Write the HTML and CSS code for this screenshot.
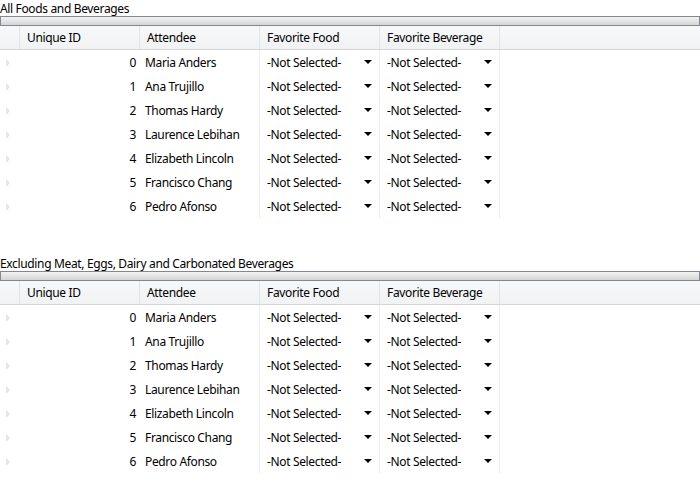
FILE: index.html
```html
<!DOCTYPE html>
<html>
<head>
<meta charset="utf-8">
<link rel="stylesheet" href="styles.css">
</head>
<body>
<section class="group">
  <div class="title">All Foods and Beverages</div>
  <div class="bar"></div>
  <div class="grid">
    <div class="row head">
      <div class="rh"></div>
      <div class="c">Unique ID</div>
      <div class="c">Attendee</div>
      <div class="c">Favorite Food</div>
      <div class="c">Favorite Beverage</div>
      <div class="fill"></div>
    </div>
    <div class="row"><div class="rh"><span class="tri"></span></div><div class="c num">0</div><div class="c">Maria Anders</div><div class="c dd">-Not Selected-<span class="arr"></span></div><div class="c dd">-Not Selected-<span class="arr"></span></div></div>
    <div class="row"><div class="rh"><span class="tri"></span></div><div class="c num">1</div><div class="c">Ana Trujillo</div><div class="c dd">-Not Selected-<span class="arr"></span></div><div class="c dd">-Not Selected-<span class="arr"></span></div></div>
    <div class="row"><div class="rh"><span class="tri"></span></div><div class="c num">2</div><div class="c">Thomas Hardy</div><div class="c dd">-Not Selected-<span class="arr"></span></div><div class="c dd">-Not Selected-<span class="arr"></span></div></div>
    <div class="row"><div class="rh"><span class="tri"></span></div><div class="c num">3</div><div class="c">Laurence Lebihan</div><div class="c dd">-Not Selected-<span class="arr"></span></div><div class="c dd">-Not Selected-<span class="arr"></span></div></div>
    <div class="row"><div class="rh"><span class="tri"></span></div><div class="c num">4</div><div class="c">Elizabeth Lincoln</div><div class="c dd">-Not Selected-<span class="arr"></span></div><div class="c dd">-Not Selected-<span class="arr"></span></div></div>
    <div class="row"><div class="rh"><span class="tri"></span></div><div class="c num">5</div><div class="c">Francisco Chang</div><div class="c dd">-Not Selected-<span class="arr"></span></div><div class="c dd">-Not Selected-<span class="arr"></span></div></div>
    <div class="row"><div class="rh"><span class="tri"></span></div><div class="c num">6</div><div class="c">Pedro Afonso</div><div class="c dd">-Not Selected-<span class="arr"></span></div><div class="c dd">-Not Selected-<span class="arr"></span></div></div>
  </div>
</section>
<section class="group">
  <div class="title">Excluding Meat, Eggs, Dairy and Carbonated Beverages</div>
  <div class="bar"></div>
  <div class="grid">
    <div class="row head">
      <div class="rh"></div>
      <div class="c">Unique ID</div>
      <div class="c">Attendee</div>
      <div class="c">Favorite Food</div>
      <div class="c">Favorite Beverage</div>
      <div class="fill"></div>
    </div>
    <div class="row"><div class="rh"><span class="tri"></span></div><div class="c num">0</div><div class="c">Maria Anders</div><div class="c dd">-Not Selected-<span class="arr"></span></div><div class="c dd">-Not Selected-<span class="arr"></span></div></div>
    <div class="row"><div class="rh"><span class="tri"></span></div><div class="c num">1</div><div class="c">Ana Trujillo</div><div class="c dd">-Not Selected-<span class="arr"></span></div><div class="c dd">-Not Selected-<span class="arr"></span></div></div>
    <div class="row"><div class="rh"><span class="tri"></span></div><div class="c num">2</div><div class="c">Thomas Hardy</div><div class="c dd">-Not Selected-<span class="arr"></span></div><div class="c dd">-Not Selected-<span class="arr"></span></div></div>
    <div class="row"><div class="rh"><span class="tri"></span></div><div class="c num">3</div><div class="c">Laurence Lebihan</div><div class="c dd">-Not Selected-<span class="arr"></span></div><div class="c dd">-Not Selected-<span class="arr"></span></div></div>
    <div class="row"><div class="rh"><span class="tri"></span></div><div class="c num">4</div><div class="c">Elizabeth Lincoln</div><div class="c dd">-Not Selected-<span class="arr"></span></div><div class="c dd">-Not Selected-<span class="arr"></span></div></div>
    <div class="row"><div class="rh"><span class="tri"></span></div><div class="c num">5</div><div class="c">Francisco Chang</div><div class="c dd">-Not Selected-<span class="arr"></span></div><div class="c dd">-Not Selected-<span class="arr"></span></div></div>
    <div class="row"><div class="rh"><span class="tri"></span></div><div class="c num">6</div><div class="c">Pedro Afonso</div><div class="c dd">-Not Selected-<span class="arr"></span></div><div class="c dd">-Not Selected-<span class="arr"></span></div></div>
  </div>
</section>
</body>
</html>
```
FILE: styles.css
```css
html, body {
  margin: 0;
  padding: 0;
  background: #fff;
}
body {
  width: 700px;
  height: 500px;
  overflow: hidden;
  font-family: "Noto Sans", "Open Sans", sans-serif;
  font-size: 12px;
  letter-spacing: -0.35px;
  color: #000;
}
.group {
  height: 255px;
  display: flex;
  flex-direction: column;
}
.title {
  height: 15px;
  padding-top: 1px;
  line-height: 16px;
  white-space: nowrap;
}
.bar {
  height: 8px;
  width: 698px;
  border: 1px solid #828790;
  background: linear-gradient(#f3f3f3, #d4d4d4);
}
.grid {
  display: flex;
  flex-direction: column;
}
.row {
  display: flex;
  height: 24px;
}
.head {
  height: 23px;
  background: linear-gradient(#f7f8f9, #f1f2f4);
  border-bottom: 1px solid #d5d5d5;
}
.rh {
  width: 20px;
  flex: none;
  position: relative;
  border-right: 1px solid #e3e4e6;
  box-sizing: border-box;
}
.row:not(.head) .rh {
  border-right: none;
}
.c {
  width: 120px;
  flex: none;
  box-sizing: border-box;
  padding: 0 7px;
  line-height: 23px;
  border-right: 1px solid #e3e4e6;
  white-space: nowrap;
  position: relative;
}
.row:not(.head) .c {
  line-height: 23px;
  padding-top: 1px;
  border-right-color: #ececec;
}
.row:not(.head) .num {
  border-right: none;
}
.num {
  text-align: right;
  padding-right: 4px;
}
.row:not(.head) .c:nth-child(3) {
  padding-left: 5px;
}
.dd {
  padding-left: 7px;
}
.fill {
  flex: 1;
}
.tri {
  position: absolute;
  left: 6px;
  top: 9px;
  width: 0;
  height: 0;
  border-top: 4px solid transparent;
  border-bottom: 4px solid transparent;
  border-left: 4px solid #e6e6e6;
}
.arr {
  position: absolute;
  right: 7px;
  top: 10px;
  width: 0;
  height: 0;
  border-left: 4px solid transparent;
  border-right: 4px solid transparent;
  border-top: 4px solid #000;
}
```
